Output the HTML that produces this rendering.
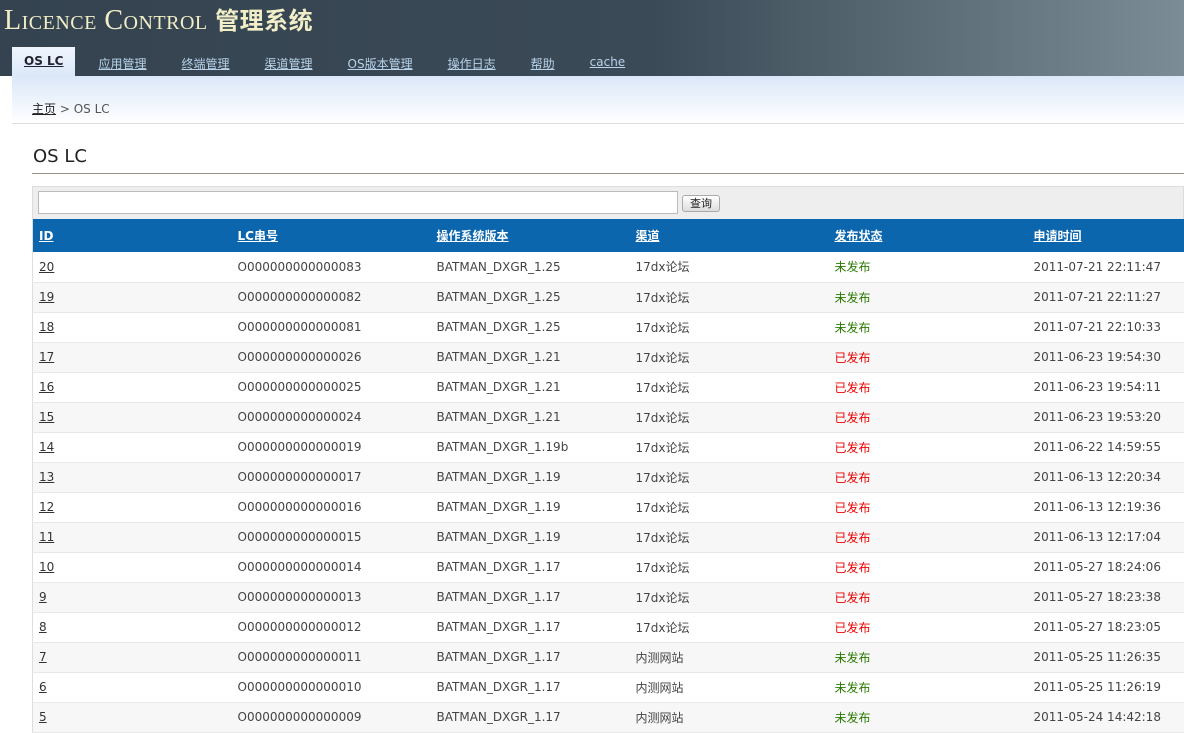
<!DOCTYPE html>
<html><head><meta charset="utf-8"><style>
*{margin:0;padding:0;box-sizing:border-box}
body{width:1184px;height:732px;overflow:hidden;background:#fff;font-family:"DejaVu Sans","Liberation Sans","Noto Sans CJK SC",sans-serif;font-size:12px;color:#444}
#hd{height:76px;background:linear-gradient(90deg,#34434f 0%,#3a4a56 55%,#7c8c96 100%);position:relative}
#hd h1{position:absolute;left:4px;top:1px;font-family:"Liberation Serif","Noto Serif CJK SC",serif;font-weight:normal;color:#f1eec8;font-size:28px;letter-spacing:0.5px;font-variant:small-caps}
#hd h1 b{font-family:"Noto Sans CJK SC",sans-serif;font-weight:bold;font-size:24px}
#nav{position:absolute;left:12px;top:47px;height:29px;display:flex}
#nav a{color:#b9d3ea;text-decoration:underline;font-size:12px;padding:8px 17px 0 18px;height:29px}
#nav a.on{background:linear-gradient(#f0f5fc,#dbe8f8);color:#223;font-weight:bold;padding:7px 12px 0 12px;margin-right:5px}
#sub{height:48px;background:linear-gradient(#dbe7f9,#fff);margin-left:12px;border-bottom:1px solid #ddd;position:relative}
#sub div{position:absolute;left:20px;top:24px;color:#555}
#sub a{color:#222;text-decoration:underline}
h2{font-weight:normal;font-size:18px;color:#222;margin:22px 0 0 33px;height:27px}
hr{border:0;border-top:1px solid #9a9088;margin:0 0 12px 32px}
#srch{margin-left:32px;height:33px;background:#eee;border:1px solid #ddd;border-bottom:0;position:relative}
#srch .i{position:absolute;left:5px;top:4px;width:640px;height:23px;background:#fff;border:1px solid #bbb}
#srch .b{position:absolute;left:649px;top:8px;width:38px;height:17px;border:1px solid #aaa;border-radius:3px;background:linear-gradient(#fff,#ddd);font-size:11px;text-align:center;line-height:15px;color:#222}
table{margin-left:32px;border-collapse:collapse;width:1152px;table-layout:fixed;border-left:1px solid #ddd}
th{background:#0b66ad;color:#fff;height:33px;text-align:left;text-decoration:underline;font-weight:bold;padding-left:6px}
td{height:30px;padding-left:6px;border-bottom:1px solid #e8e8e8}
tr:nth-child(odd) td{background:#f7f7f7}
td a{color:#333;text-decoration:underline}
.n{color:#2a7a00}.y{color:#e00}
</style></head><body>
<div id="hd"><h1>Licence Control <b>管理系统</b></h1>
<div id="nav"><a class="on">OS LC</a><a>应用管理</a><a>终端管理</a><a>渠道管理</a><a>OS版本管理</a><a>操作日志</a><a>帮助</a><a>cache</a></div></div>
<div id="sub"><div><a>主页</a> &gt; OS LC</div></div>
<h2>OS LC</h2><hr>
<div id="srch"><div class="i"></div><div class="b">查询</div></div>
<table><colgroup><col style="width:199px"><col style="width:199px"><col style="width:199px"><col style="width:199px"><col style="width:199px"><col></colgroup>
<tr><th>ID</th><th>LC串号</th><th>操作系统版本</th><th>渠道</th><th>发布状态</th><th>申请时间</th></tr>
<tr><td><a>20</a></td><td>O000000000000083</td><td>BATMAN_DXGR_1.25</td><td>17dx论坛</td><td class="n">未发布</td><td>2011-07-21 22:11:47</td></tr>
<tr><td><a>19</a></td><td>O000000000000082</td><td>BATMAN_DXGR_1.25</td><td>17dx论坛</td><td class="n">未发布</td><td>2011-07-21 22:11:27</td></tr>
<tr><td><a>18</a></td><td>O000000000000081</td><td>BATMAN_DXGR_1.25</td><td>17dx论坛</td><td class="n">未发布</td><td>2011-07-21 22:10:33</td></tr>
<tr><td><a>17</a></td><td>O000000000000026</td><td>BATMAN_DXGR_1.21</td><td>17dx论坛</td><td class="y">已发布</td><td>2011-06-23 19:54:30</td></tr>
<tr><td><a>16</a></td><td>O000000000000025</td><td>BATMAN_DXGR_1.21</td><td>17dx论坛</td><td class="y">已发布</td><td>2011-06-23 19:54:11</td></tr>
<tr><td><a>15</a></td><td>O000000000000024</td><td>BATMAN_DXGR_1.21</td><td>17dx论坛</td><td class="y">已发布</td><td>2011-06-23 19:53:20</td></tr>
<tr><td><a>14</a></td><td>O000000000000019</td><td>BATMAN_DXGR_1.19b</td><td>17dx论坛</td><td class="y">已发布</td><td>2011-06-22 14:59:55</td></tr>
<tr><td><a>13</a></td><td>O000000000000017</td><td>BATMAN_DXGR_1.19</td><td>17dx论坛</td><td class="y">已发布</td><td>2011-06-13 12:20:34</td></tr>
<tr><td><a>12</a></td><td>O000000000000016</td><td>BATMAN_DXGR_1.19</td><td>17dx论坛</td><td class="y">已发布</td><td>2011-06-13 12:19:36</td></tr>
<tr><td><a>11</a></td><td>O000000000000015</td><td>BATMAN_DXGR_1.19</td><td>17dx论坛</td><td class="y">已发布</td><td>2011-06-13 12:17:04</td></tr>
<tr><td><a>10</a></td><td>O000000000000014</td><td>BATMAN_DXGR_1.17</td><td>17dx论坛</td><td class="y">已发布</td><td>2011-05-27 18:24:06</td></tr>
<tr><td><a>9</a></td><td>O000000000000013</td><td>BATMAN_DXGR_1.17</td><td>17dx论坛</td><td class="y">已发布</td><td>2011-05-27 18:23:38</td></tr>
<tr><td><a>8</a></td><td>O000000000000012</td><td>BATMAN_DXGR_1.17</td><td>17dx论坛</td><td class="y">已发布</td><td>2011-05-27 18:23:05</td></tr>
<tr><td><a>7</a></td><td>O000000000000011</td><td>BATMAN_DXGR_1.17</td><td>内测网站</td><td class="n">未发布</td><td>2011-05-25 11:26:35</td></tr>
<tr><td><a>6</a></td><td>O000000000000010</td><td>BATMAN_DXGR_1.17</td><td>内测网站</td><td class="n">未发布</td><td>2011-05-25 11:26:19</td></tr>
<tr><td><a>5</a></td><td>O000000000000009</td><td>BATMAN_DXGR_1.17</td><td>内测网站</td><td class="n">未发布</td><td>2011-05-24 14:42:18</td></tr>
</table>
</body></html>
